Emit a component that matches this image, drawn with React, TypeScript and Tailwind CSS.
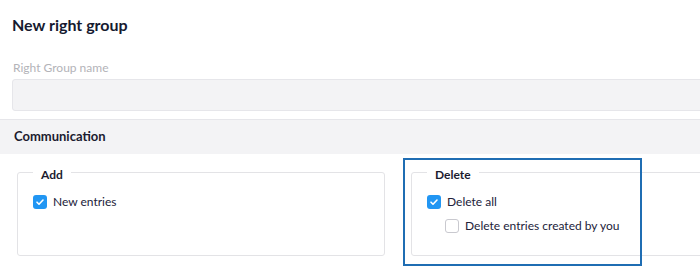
import React from "react"

function Check({ checked, label }: { checked?: boolean; label: string }) {
  return (
    <label className="flex items-center gap-[6px] h-[14px] leading-[14px] text-[12px] text-[#22223a]">
      {checked ? (
        <span className="w-[14px] h-[14px] rounded-[3px] bg-[#2196f3] flex items-center justify-center">
          <svg width="10" height="10" viewBox="0 0 10 10" fill="none">
            <path d="M2 5.2l2 2L8 3" stroke="white" strokeWidth="1.6" strokeLinecap="round" strokeLinejoin="round" />
          </svg>
        </span>
      ) : (
        <span className="w-[14px] h-[14px] rounded-[3px] bg-white border border-[#c9c9cf]" />
      )}
      <span>{label}</span>
    </label>
  )
}

function Group({ title, children }: { title: string; children: React.ReactNode }) {
  return (
    <fieldset className="border border-[#e3e3e6] rounded-[3px] h-[92px] px-[15px] pt-[15px] min-w-0">
      <legend className="px-[8px] text-[12px] leading-[16px] font-bold text-[#1b1b2f]">
        <span className="relative top-[3px]">{title}</span>
      </legend>
      <div className="flex flex-col gap-[10px]">{children}</div>
    </fieldset>
  )
}

export default function App() {
  return (
    <div className="relative w-[700px] h-[272px] overflow-hidden bg-white font-['Lato',sans-serif]">
      <div className="px-[12px] pt-[15px]">
        <h1 className="text-[16px] leading-[20px] font-bold text-[#161a30]">New right group</h1>
        <div className="mt-[26px] text-[12px] leading-[14px] text-[#b3b3b8] pl-[1px]">Right Group name</div>
        <div className="mt-[4px] h-[32px] w-[720px] bg-[#f3f3f5] border border-[#e6e6ea] rounded-[3px]" />
      </div>
      <div className="mt-[8px] h-[35px] bg-[#f3f3f5] border-t border-[#e6e6ea] flex items-center px-[14px]">
        <span className="text-[13px] font-bold text-[#1b1b2f]">Communication</span>
      </div>
      <div className="grid grid-cols-[368px_368px] gap-[26px] pl-[17px] mt-[10px]">
        <Group title="Add">
          <Check checked label="New entries" />
        </Group>
        <Group title="Delete">
          <Check checked label="Delete all" />
          <div className="pl-[18px]">
            <Check label="Delete entries created by you" />
          </div>
        </Group>
      </div>
      <div className="absolute left-[403px] top-[158px] w-[239px] h-[108px] border-2 border-[#1f6db3]" />
    </div>
  )
}
